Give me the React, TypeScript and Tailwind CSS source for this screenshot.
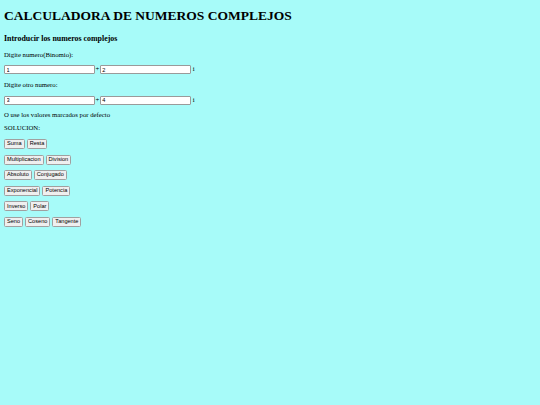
const rows: string[][] = [
  ["Suma", "Resta"],
  ["Multiplicacion", "Division"],
  ["Absoluto", "Conjugado"],
  ["Exponencial", "Potencia"],
  ["Inverso", "Polar"],
  ["Seno", "Coseno", "Tangente"],
];

function NumInput({ value }: { value: string }) {
  return (
    <input
      type="text"
      defaultValue={value}
      className="w-[91px] h-[9px] px-[1.5px] text-[5.6px] leading-none bg-white border border-[#9a9a9a] rounded-[1px] font-['Liberation_Sans',sans-serif] text-black outline-none"
    />
  );
}

function ComplexRow({ re, im }: { re: string; im: string }) {
  return (
    <div className="flex items-center h-[9px] text-[6.75px] leading-none">
      <NumInput value={re} />
      <span className="px-[0.5px]">+</span>
      <NumInput value={im} />
      <span className="ml-[2px]">i</span>
    </div>
  );
}

export default function App() {
  return (
    <div className="min-h-[405px] w-full bg-[#a7fbf9] text-black font-['Liberation_Serif',serif] px-[4px] pt-[8px]">
      <h1 className="text-[13.5px] font-bold leading-[16px]">CALCULADORA DE NUMEROS COMPLEJOS</h1>
      <h3 className="mt-[9.5px] text-[7.9px] font-bold leading-[9px]">Introducir los numeros complejos</h3>

      <p className="mt-[8.5px] text-[6.75px] leading-[8px]">Digite numero(Binomio):</p>
      <div className="mt-[6px]">
        <ComplexRow re="1" im="2" />
      </div>

      <p className="mt-[7px] text-[6.75px] leading-[8px]">Digite otro numero:</p>
      <div className="mt-[6.5px]">
        <ComplexRow re="3" im="4" />
      </div>

      <p className="mt-[6.5px] text-[6.75px] leading-[8px]">O use los valores marcados por defecto</p>
      <p className="mt-[5px] text-[6.75px] leading-[8px]">SOLUCION:</p>

      {/* operation buttons */}
      <div className="mt-[7px] flex flex-col gap-[5.6px]">
        {rows.map((row, i) => (
          <div key={i} className="flex gap-[2px]">
            {row.map((label) => (
              <button
                key={label}
                className="h-[10px] px-[2px] text-[5.6px] leading-none bg-[#efefef] border border-[#a0a0a0] rounded-[1.5px] font-['Liberation_Sans',sans-serif] text-black"
              >
                {label}
              </button>
            ))}
          </div>
        ))}
      </div>
    </div>
  );
}
